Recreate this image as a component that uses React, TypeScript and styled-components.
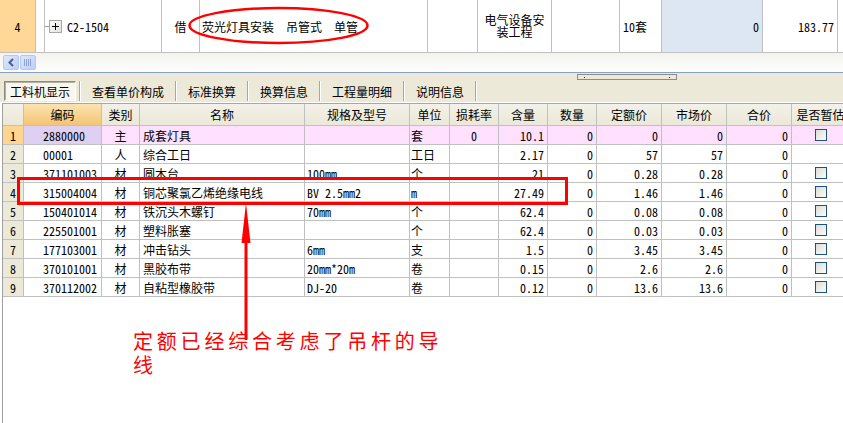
import React from 'react'
import styled, { createGlobalStyle } from 'styled-components'

const GlobalStyle = createGlobalStyle`
  html, body {
    margin: 0;
    padding: 0;
    background: #fff;
  }
  body {
    font-family: "Noto Sans Mono CJK SC", "Noto Sans CJK SC", "Liberation Sans", sans-serif;
    font-size: 12px;
    color: #000;
  }
  #root {
    width: 843px;
    height: 423px;
    overflow: hidden;
    position: relative;
  }
`

interface Row {
  no: number
  code: string
  type: string
  name: string
  spec: string
  unit: string
  loss: string
  qty: string
  num: string
  quota: string
  market: string
  total: string
  check: boolean
  main?: boolean
}

const rows: Row[] = [
  { no: 1, code: '2880000', type: '主', name: '成套灯具', spec: '', unit: '套', loss: '0', qty: '10.1', num: '0', quota: '0', market: '0', total: '0', check: true, main: true },
  { no: 2, code: '00001', type: '人', name: '综合工日', spec: '', unit: '工日', loss: '', qty: '2.17', num: '0', quota: '57', market: '57', total: '0', check: false },
  { no: 3, code: '371101003', type: '材', name: '圆木台', spec: '100mm', unit: '个', loss: '', qty: '21', num: '0', quota: '0.28', market: '0.28', total: '0', check: true },
  { no: 4, code: '315004004', type: '材', name: '铜芯聚氯乙烯绝缘电线', spec: 'BV 2.5mm2', unit: 'm', loss: '', qty: '27.49', num: '0', quota: '1.46', market: '1.46', total: '0', check: true },
  { no: 5, code: '150401014', type: '材', name: '铁沉头木螺钉', spec: '70mm', unit: '个', loss: '', qty: '62.4', num: '0', quota: '0.08', market: '0.08', total: '0', check: true },
  { no: 6, code: '225501001', type: '材', name: '塑料胀塞', spec: '', unit: '个', loss: '', qty: '62.4', num: '0', quota: '0.03', market: '0.03', total: '0', check: true },
  { no: 7, code: '177103001', type: '材', name: '冲击钻头', spec: '6mm', unit: '支', loss: '', qty: '1.5', num: '0', quota: '3.45', market: '3.45', total: '0', check: true },
  { no: 8, code: '370101001', type: '材', name: '黑胶布带', spec: '20mm*20m', unit: '卷', loss: '', qty: '0.15', num: '0', quota: '2.6', market: '2.6', total: '0', check: true },
  { no: 9, code: '370112002', type: '材', name: '自粘型橡胶带', spec: 'DJ-20', unit: '卷', loss: '', qty: '0.12', num: '0', quota: '13.6', market: '13.6', total: '0', check: true },
]

const headers = ['', '编码', '类别', '名称', '规格及型号', '单位', '损耗率', '含量', '数量', '定额价', '市场价', '合价', '是否暂估']
const tabs = ['工料机显示', '查看单价构成', '标准换算', '换算信息', '工程量明细', '说明信息']

const App: React.FC = () => {
  return (
    <Page>
      <GlobalStyle />
      <TopRow>
        <TopCell w={36} bg="#ffd897" align="center">4</TopCell>
        <TopCell w={9} />
        <TopCell w={117}>
          <TreeLine />
          <PlusBox>
            <svg width="7" height="7" viewBox="0 0 7 7">
              <path d="M0 3.5H7M3.5 0V7" stroke="#000" strokeWidth="1" />
            </svg>
          </PlusBox>
          <TopCode>C2-1504</TopCode>
        </TopCell>
        <TopCell w={38} align="center">借</TopCell>
        <TopCell w={228} pad={2}>荧光灯具安装  吊管式  单管</TopCell>
        <TopCell w={50} />
        <TopCell w={74} align="center">
          <Wrapped>电气设备安装工程</Wrapped>
        </TopCell>
        <TopCell w={68} />
        <TopCell w={42} pad={3}>10套</TopCell>
        <TopCell w={101} bg="#dde7f4" align="right">0</TopCell>
        <TopCell w={75} align="right">183.77</TopCell>
        <TopCell w={20} />
      </TopRow>

      <ScrollStrip>
        <ScrollButton>
          <svg width="8" height="9" viewBox="0 0 8 9">
            <path d="M6 1L2.5 4.5L6 8" stroke="#4d6185" strokeWidth="2" fill="none" />
          </svg>
        </ScrollButton>
        <ScrollThumb>
          <svg width="8" height="7" viewBox="0 0 8 7">
            <path d="M0.5 0V7M2.5 0V7M4.5 0V7M6.5 0V7" stroke="#8ea4d8" strokeWidth="1" />
          </svg>
        </ScrollThumb>
      </ScrollStrip>

      <Toolbar>
        <Grip>
          <GripDot />
          <GripDot />
        </Grip>
        <Tabs>
          {tabs.map((t, i) => (
            <React.Fragment key={t}>
              <Tab active={i === 0}>{t}</Tab>
              <Separator />
            </React.Fragment>
          ))}
        </Tabs>
      </Toolbar>

      <Grid>
        <GridRow>
          {headers.map((h, i) => (
            <HeadCell key={i} selected={i === 1}>
              {h}
            </HeadCell>
          ))}
        </GridRow>
        {rows.map((r) => {
          const bg = r.main ? '#ffe0fe' : undefined
          return (
            <GridRow key={r.no}>
              <NoCell selected={!!r.main}>{r.no}</NoCell>
              <Cell pad={19} bg={r.main ? '#ddd0f2' : undefined}>{r.code}</Cell>
              <Cell align="center" bg={bg}>{r.type}</Cell>
              <Cell pad={3} bg={bg}>{r.name}</Cell>
              <Cell pad={2} bg={bg}>{r.spec}</Cell>
              <Cell pad={1} bg={bg}>{r.unit}</Cell>
              <Cell align="center" bg={bg}>{r.loss}</Cell>
              <Cell align="right" bg={bg}>{r.qty}</Cell>
              <Cell align="right" bg={bg}>{r.num}</Cell>
              <Cell align="right" bg={bg}>{r.quota}</Cell>
              <Cell align="right" bg={bg}>{r.market}</Cell>
              <Cell align="right" bg={bg}>{r.total}</Cell>
              <Cell align="center" bg={bg}>
                {r.check && <CheckBox />}
              </Cell>
            </GridRow>
          )
        })}
      </Grid>

      <Marks width="843" height="423" viewBox="0 0 843 423">
        <ellipse cx="278.5" cy="25.5" rx="89" ry="17.5" fill="none" stroke="#ff0000" strokeWidth="2.5" />
        <rect x="18.5" y="178.5" width="548" height="25" fill="none" stroke="#ff0000" strokeWidth="3" />
        <path d="M246 242V340" stroke="#ff0000" strokeWidth="3" />
        <path d="M246 203L250.5 243L241.5 243Z" fill="#ff0000" />
      </Marks>
      <Note>定额已经综合考虑了吊杆的导线</Note>
    </Page>
  )
}

const Page = styled.div`
  width: 843px;
  height: 423px;
  display: flex;
  flex-direction: column;
  background: #fff;
`

const TopRow = styled.div`
  display: flex;
  height: 53px;
  border-bottom: 1px solid #c0c0c0;
  box-sizing: border-box;
  flex-shrink: 0;
`

const TopCell = styled.div<{ w: number; bg?: string; align?: string; pad?: number }>`
  width: ${({ w }) => w}px;
  flex-shrink: 0;
  box-sizing: border-box;
  border-right: 1px solid #c0c0c0;
  background: ${({ bg }) => bg || '#fff'};
  display: flex;
  align-items: center;
  justify-content: ${({ align }) =>
    align === 'center' ? 'center' : align === 'right' ? 'flex-end' : 'flex-start'};
  padding: 0 ${({ align }) => (align === 'right' ? 3 : 0)}px 0 ${({ pad }) => pad || 0}px;
  white-space: pre;
`

const TreeLine = styled.span`
  width: 4px;
  height: 1px;
  background: #a0a0a0;
`

const PlusBox = styled.span`
  width: 13px;
  height: 13px;
  box-sizing: border-box;
  border: 1px solid #a7a6aa;
  background: linear-gradient(135deg, #ffffff, #e2e1dc);
  display: flex;
  align-items: center;
  justify-content: center;
`

const TopCode = styled.span`
  margin-left: 5px;
`

const Wrapped = styled.span`
  white-space: normal;
  width: 62px;
  line-height: 12px;
  text-align: center;
  word-break: break-all;
`

const ScrollStrip = styled.div`
  height: 19px;
  flex-shrink: 0;
  display: flex;
  align-items: center;
  gap: 1px;
  padding-left: 3px;
  background: linear-gradient(#f4f3ee, #fdfdfb);
  border-bottom: 1px solid #87a0c3;
`

const ScrollButton = styled.div`
  width: 16px;
  height: 15px;
  box-sizing: border-box;
  border: 1px solid #b4c8f6;
  border-radius: 2px;
  background: linear-gradient(135deg, #dfe8fe, #bccdf8);
  display: flex;
  align-items: center;
  justify-content: center;
`

const ScrollThumb = styled(ScrollButton)``

const Toolbar = styled.div`
  height: 29px;
  flex-shrink: 0;
  background: #ece9d8;
  display: flex;
  flex-direction: column;
`

const Grip = styled.div`
  margin: 1px 0 0 577px;
  width: 100px;
  height: 6px;
  box-sizing: border-box;
  border: 1px solid #8c8c8c;
  display: flex;
  align-items: center;
  justify-content: space-between;
  padding: 0 6px;
`

const GripDot = styled.span`
  width: 1px;
  height: 1px;
  background: #1a1a6a;
`

const Tabs = styled.div`
  margin-top: 1px;
  height: 20px;
  display: flex;
  align-items: center;
  padding-left: 4px;
`

const Tab = styled.div<{ active?: boolean }>`
  height: 20px;
  box-sizing: border-box;
  display: flex;
  align-items: center;
  padding: 0 ${({ active }) => (active ? 5 : 10)}px;
  margin-right: ${({ active }) => (active ? 3 : 0)}px;
  border: 1px solid transparent;
  ${({ active }) =>
    active &&
    `
    border-color: #8d8a7f #fff #fff #8d8a7f;
    background: #f7f6f1;
    box-shadow: inset 1px 1px 0 #b5b2a4;
  `}
`

const Separator = styled.span`
  width: 1px;
  height: 20px;
  border-left: 1px solid #aca899;
  background: #fff;
`

const Grid = styled.div`
  margin-top: 1px;
  margin-left: 2px;
  flex: 1;
  border-top: 1px solid #92a9c8;
  border-left: 1px solid #a0a0a0;
  background: #fff;
`

const GridRow = styled.div`
  display: grid;
  grid-template-columns: 21px 78px 38px 165px 105px 40px 49px 49px 49px 65px 65px 65px 58px;
`

const HeadCell = styled.div<{ selected?: boolean }>`
  height: 22px;
  box-sizing: border-box;
  border-right: 1px solid #c0c0c0;
  border-bottom: 1px solid #c0c0c0;
  background: ${({ selected }) =>
    selected ? 'linear-gradient(#fbe3b0, #f3c574)' : 'linear-gradient(#f3f1e8, #ebe8d9)'};
  display: flex;
  align-items: center;
  justify-content: center;
  white-space: nowrap;
  overflow: hidden;
`

const Cell = styled.div<{ align?: string; pad?: number; bg?: string }>`
  height: 19px;
  box-sizing: border-box;
  border-right: 1px solid #c0c0c0;
  border-bottom: 1px solid #c0c0c0;
  background: ${({ bg }) => bg || '#fff'};
  display: flex;
  align-items: center;
  justify-content: ${({ align }) =>
    align === 'center' ? 'center' : align === 'right' ? 'flex-end' : 'flex-start'};
  padding: 0 ${({ align }) => (align === 'right' ? 3 : 0)}px 0 ${({ pad }) => pad || 0}px;
  white-space: nowrap;
  overflow: hidden;
`

const NoCell = styled(Cell)<{ selected?: boolean }>`
  justify-content: center;
  background: ${({ selected }) => (selected ? '#ffd58f' : '#ece9d8')};
`

const CheckBox = styled.span`
  width: 12px;
  height: 12px;
  box-sizing: border-box;
  border: 1px solid #1c5180;
  background: linear-gradient(135deg, #dcdcd6, #fbfbf9);
`

const Marks = styled.svg`
  position: absolute;
  left: 0;
  top: 0;
  pointer-events: none;
`

const Note = styled.div`
  position: absolute;
  left: 133px;
  top: 329px;
  width: 322px;
  color: #ff0000;
  font-size: 20px;
  line-height: 24px;
  letter-spacing: 3.8px;
`

export default App
